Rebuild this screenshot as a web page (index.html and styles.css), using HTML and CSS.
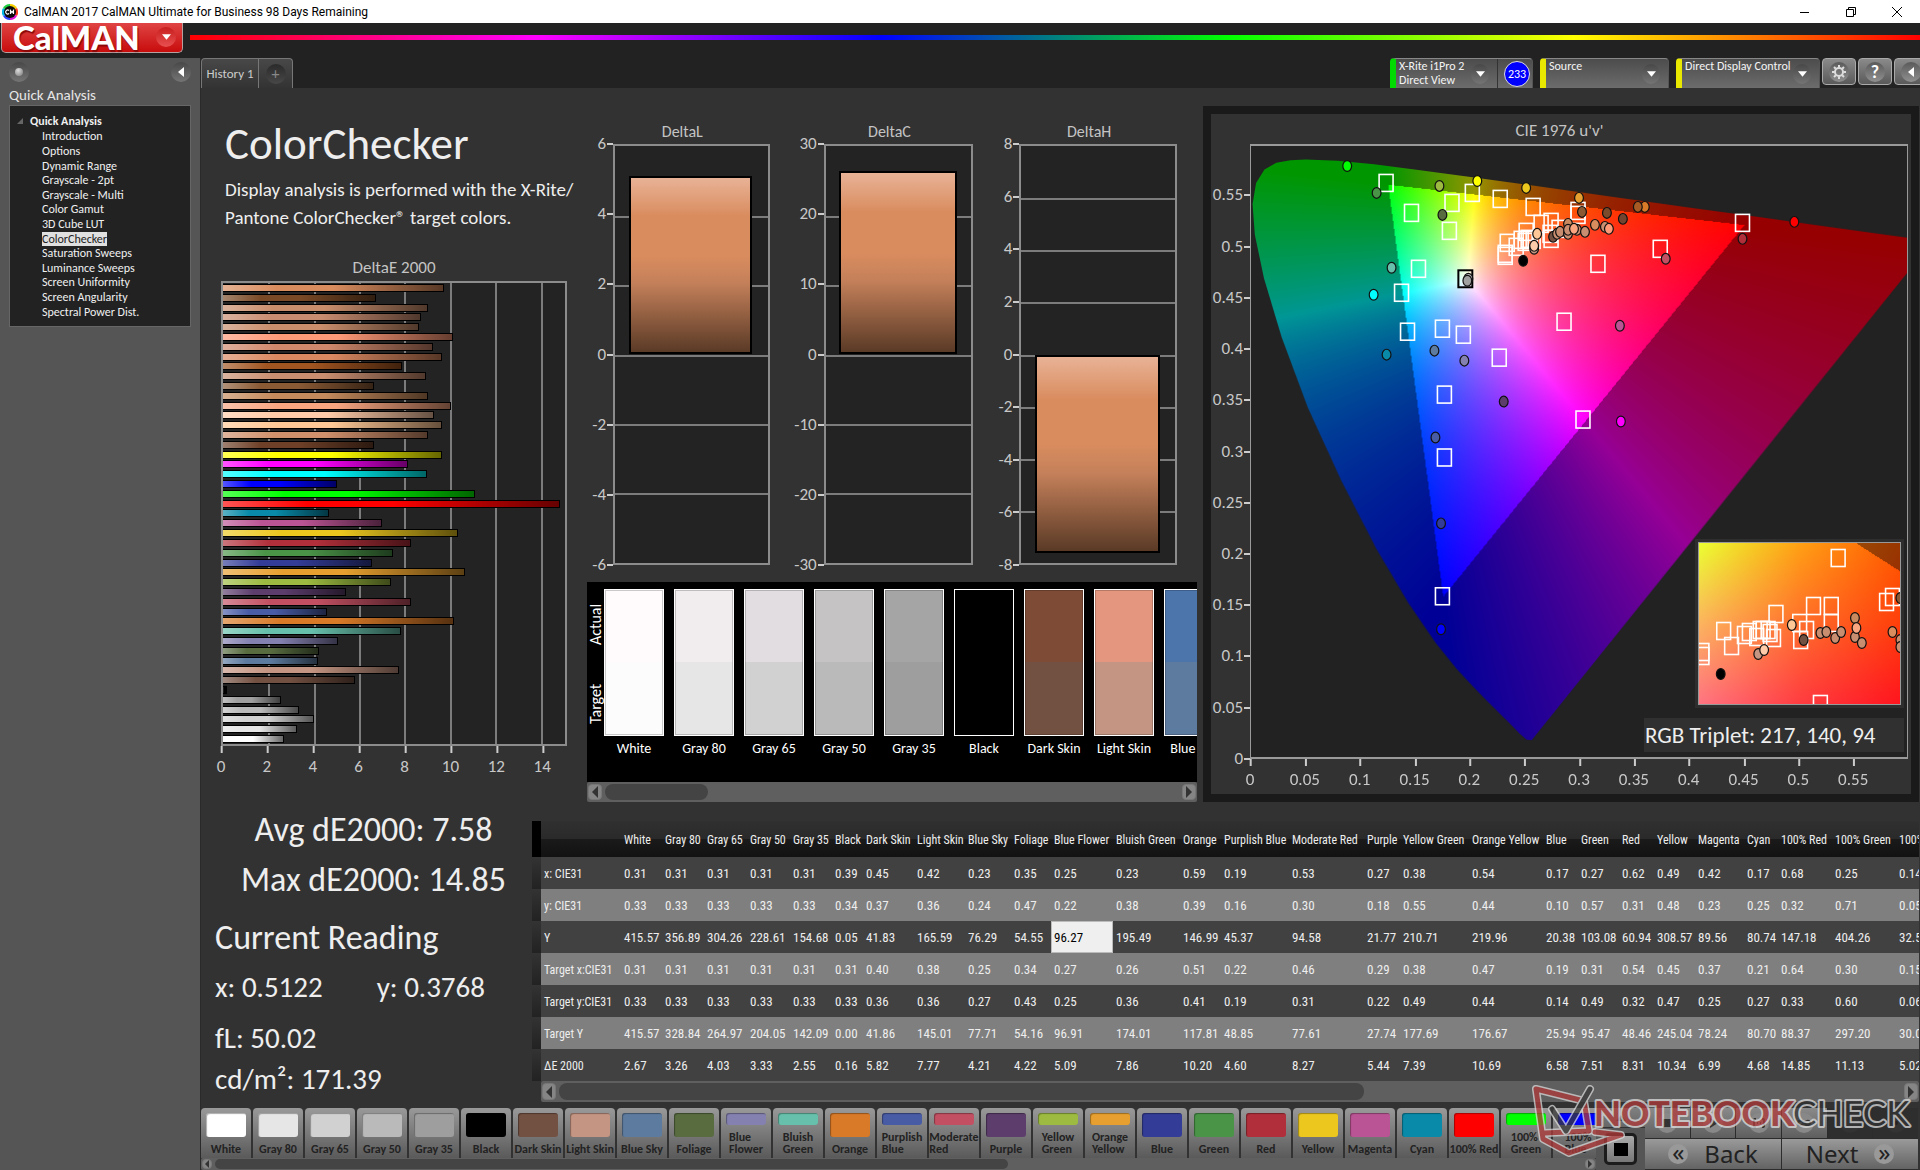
FILE: index.html
```html
<!DOCTYPE html>
<html lang="en">
<head>
<meta charset="utf-8">
<title>CalMAN 2017 CalMAN Ultimate for Business</title>
<link rel="stylesheet" href="styles.css">
</head>
<body>
<header class="titlebar">
  <svg class="app-icon" viewBox="0 0 16 16" aria-hidden="true">
    <path d="M8 0a8 8 0 0 1 7 4L8 8z" fill="#f4d000"/><path d="M15 4a8 8 0 0 1 0 8L8 8z" fill="#ff3b1f"/>
    <path d="M15 12a8 8 0 0 1-7 4V8z" fill="#e010d0"/><path d="M8 16a8 8 0 0 1-7-4l7-4z" fill="#3040ff"/>
    <path d="M1 12a8 8 0 0 1 0-8l7 4z" fill="#00b8e8"/><path d="M1 4a8 8 0 0 1 7-4v8z" fill="#20d040"/>
    <circle cx="8" cy="8" r="6" fill="#0a0a0a"/>
    <path d="M7 6.5a2 2 0 1 0 0 3M8.500 10V6.500L10 8.500l1.500-2V10" fill="none" stroke="#fff" stroke-width="1.200"/>
  </svg>
  <span class="app-title">CalMAN 2017 CalMAN Ultimate for Business 98 Days Remaining</span>
  <span class="win-buttons">
    <button aria-label="Minimize"><svg viewBox="0 0 12 12"><path d="M1 6.500h9"/></svg></button>
    <button aria-label="Restore"><svg viewBox="0 0 12 12"><path d="M1.500 3.500h7v7h-7zM3.500 3.500v-2h7v7h-2"/></svg></button>
    <button aria-label="Close"><svg viewBox="0 0 12 12"><path d="M1 1l10 10M11 1L1 11"/></svg></button>
  </span>
</header>

<div class="brandbar">
  <button class="logo">CalMAN<span class="round red"><svg viewBox="0 0 10 6"><path d="M0 0h10L5 6z"/></svg></span></button>
  <div class="rainbow"></div>
</div>

<div class="work">
  <aside class="sidebar">
    <div class="side-tools">
      <button class="round" aria-label="Pin"><span class="knob"></span></button>
      <button class="round" aria-label="Collapse"><svg viewBox="0 0 6 10"><path d="M6 0v10L0 5z"/></svg></button>
    </div>
    <h2>Quick Analysis</h2>
    <nav class="tree">
      <p class="tree-root"><svg viewBox="0 0 6 6"><path d="M6 0v6H0z"/></svg>Quick Analysis</p>
      <ul>
        <li><a href="#">Introduction</a></li>
        <li><a href="#">Options</a></li>
        <li><a href="#">Dynamic Range</a></li>
        <li><a href="#">Grayscale - 2pt</a></li>
        <li><a href="#">Grayscale - Multi</a></li>
        <li><a href="#">Color Gamut</a></li>
        <li><a href="#">3D Cube LUT</a></li>
        <li><a href="#" class="current">ColorChecker</a></li>
        <li><a href="#">Saturation Sweeps</a></li>
        <li><a href="#">Luminance Sweeps</a></li>
        <li><a href="#">Screen Uniformity</a></li>
        <li><a href="#">Screen Angularity</a></li>
        <li><a href="#">Spectral Power Dist.</a></li>
      </ul>
    </nav>
  </aside>

  <div class="stage">
    <div class="tabrow">
      <div class="tabs">
        <button class="tab">History 1</button><button class="tab add" aria-label="New tab"><span class="round dim">+</span></button>
      </div>
      <div class="devices">
        <div class="device meter green">
          <button class="device-main"><span>X-Rite i1Pro 2<br>Direct View</span><span class="round"><svg viewBox="0 0 10 6"><path d="M0 0h10L5 6z"/></svg></span></button>
          <button class="device-count"><span>233</span></button>
        </div>
        <div class="device source yellow">
          <button class="device-main"><span>Source</span><span class="round"><svg viewBox="0 0 10 6"><path d="M0 0h10L5 6z"/></svg></span></button>
        </div>
        <div class="device display yellow">
          <button class="device-main"><span>Direct Display Control</span><span class="round"><svg viewBox="0 0 10 6"><path d="M0 0h10L5 6z"/></svg></span></button>
        </div>
        <div class="tools">
          <button class="tool" aria-label="Settings"><span class="round lite"><svg class="gear" viewBox="0 0 16 16"><circle cx="8" cy="8" r="4"/><path d="M8 1v2.500M8 12.500V15M1 8h2.500M12.500 8H15M3 3l1.800 1.800M11.200 11.200L13 13M13 3l-1.800 1.800M4.800 11.200L3 13"/></svg></span></button>
          <button class="tool" aria-label="Help"><span class="round lite">?</span></button>
          <button class="tool" aria-label="Collapse"><span class="round lite"><svg viewBox="0 0 6 10"><path d="M6 0v10L0 5z"/></svg></span></button>
        </div>
      </div>
    </div>

    <main class="page">
      <div class="upper">
        <section class="intro">
          <h1>ColorChecker</h1>
          <p>Display analysis is performed with the X-Rite/<br>Pantone ColorChecker® target colors.</p>
          <h3>DeltaE 2000</h3>
          <div class="de-plot" id="dePlot"><div class="grid" id="deGrid"></div><div class="bars" id="deBars"></div></div>
          <div class="x-axis" id="deAxis"></div>
        </section>

        <section class="middle">
          <div class="deltas" id="deltas"></div>
          <div class="compare">
            <div class="compare-sides"><span>Actual</span><span>Target</span></div>
            <div class="compare-list" id="compare"></div>
          </div>
          <div class="scroll tall"><button aria-label="Left"><svg viewBox="0 0 6 12"><path d="M6 0v12L0 6z"/></svg></button><div class="track"><i class="thumb compare-thumb"></i></div><button aria-label="Right"><svg viewBox="0 0 6 12"><path d="M0 0v12l6-6z"/></svg></button></div>
        </section>

        <section class="cie">
          <h3>CIE 1976 u'v'</h3>
          <div class="cie-body">
            <div class="y-axis" id="cieY"></div>
            <div class="cie-plot">
              <canvas id="gamut" width="658" height="612"></canvas>
              <svg id="points" viewBox="0 0 658 612" preserveAspectRatio="none"></svg>
              <div class="inset"><canvas id="insetMap" width="202" height="160"></canvas><svg id="insetPoints" viewBox="0 0 204 161" preserveAspectRatio="none"></svg></div>
              <div class="triplet">RGB Triplet: 217, 140, 94</div>
            </div>
            <div class="x-axis" id="cieX"></div>
          </div>
        </section>
      </div>

      <div class="lower">
        <section class="readings">
          <p class="big mid">Avg dE2000: 7.58</p>
          <p class="big mid">Max dE2000: 14.85</p>
          <p class="big head">Current Reading</p>
          <p class="pair"><span>x: 0.5122</span><span>y: 0.3768</span></p>
          <p class="lum">fL: 50.02</p>
          <p class="cd">cd/m²: 171.39</p>
        </section>
        <section class="data">
          <div class="table-wrap"><table id="table"></table></div>
          <div class="scroll data-scroll"><button aria-label="Left"><svg viewBox="0 0 6 12"><path d="M6 0v12L0 6z"/></svg></button><div class="track"><i class="thumb data-thumb"></i></div><button aria-label="Right"><svg viewBox="0 0 6 12"><path d="M0 0v12l6-6z"/></svg></button></div>
        </section>
      </div>

      <footer class="dock">
        <div class="patches">
          <div class="patch-list" id="patches"></div>
          <div class="scroll thin"><button aria-label="Left"><svg viewBox="0 0 6 12"><path d="M6 0v12L0 6z"/></svg></button><div class="track"><i class="thumb patch-thumb"></i></div><button aria-label="Right"><svg viewBox="0 0 6 12"><path d="M0 0v12l6-6z"/></svg></button></div>
        </div>
        <div class="stopcol">
          <button class="up" aria-label="Up"><svg viewBox="0 0 10 6"><path d="M0 6h10L5 0z"/></svg></button>
          <button class="stop" aria-label="Stop"><span></span></button>
        </div>
        <div class="transport">
          <button aria-label="Stop reading"><svg viewBox="0 0 14 14"><path d="M3 3h8v8H3z"/></svg></button>
          <button aria-label="Play"><svg viewBox="0 0 14 14"><path d="M4 2l8 5-8 5z"/></svg></button>
          <button aria-label="Play range"><svg viewBox="0 0 14 14"><path d="M1 2h3v2H3v6h1v2H1zM13 2h-3v2h1v6h-1v2h3zM5 6h1v2H5zM8 6h1v2H8z"/></svg></button>
          <button aria-label="Continuous"><svg viewBox="0 0 14 14"><path class="line" d="M7 7C5 4 1 4 1 7s4 3 6 0 6-3 6 0-4 3-6 0z"/></svg></button>
          <button class="off" aria-label="Refresh"><svg viewBox="0 0 14 14"><path class="line" d="M11 5a5 5 0 1 0 0 5"/></svg></button>
          <button class="off" aria-label="More"><svg viewBox="0 0 14 14"><circle cx="7" cy="7" r="2"/></svg></button>
          <button class="nav"><span class="chev">«</span>Back</button>
          <button class="nav">Next<span class="chev">»</span></button>
        </div>
      </footer>
    </main>
  </div>
</div>

<svg class="watermark" viewBox="0 0 380 72" aria-hidden="true">
  <g fill="none" stroke-linejoin="round" stroke-linecap="round">
    <path d="M4 4l48 12 5 30-44 2M4 4l7 50 26 14 52-18-26-3" stroke="#d8d8d8" stroke-width="8"/>
    <path d="M4 4l48 12 5 30-44 2M4 4l7 50 26 14 52-18-26-3" stroke="#b03a3a" stroke-width="5"/>
    <path d="M20 24l14 22L58 4" stroke="#d8d8d8" stroke-width="8"/>
    <path d="M20 24l14 22L58 4" stroke="#3a3a3a" stroke-width="5"/>
  </g>
  <text class="wm-red" x="62" y="41">NOTEBOOK</text>
  <text class="wm-dark" x="261" y="41">CHECK</text>
</svg>
<script src="app.js"></script>
</body>
</html>
```
FILE: styles.css
```css
*{box-sizing:border-box}
body{margin:0;min-height:100vh;display:flex;flex-direction:column;background:#222;color:#e6e6e6;font-family:Carlito,Lato,sans-serif;font-size:12px;overflow:hidden;position:relative}
button{margin:0;padding:0;border:0;background:none;color:inherit;font:inherit;display:flex;align-items:center;justify-content:center}
h1,h2,h3,p,ul{margin:0;padding:0;font-weight:400}
svg{display:block}

.titlebar{height:23px;background:#fff;color:#000;display:flex;align-items:center;gap:6px;padding-left:2px;font-family:Roboto,sans-serif;font-size:12px}
.app-icon{width:16px;height:16px}
.win-buttons{margin-left:auto;display:flex}
.win-buttons button{width:46px;height:20px}
.win-buttons svg{width:12px;height:12px;fill:none;stroke:#000}

.brandbar{display:flex;align-items:center;gap:7px;height:35px;padding:0 0 6px 1px}
.logo{width:182px;height:30px;border:1px solid #b9a0a0;border-top:0;border-radius:0 0 5px 5px;background:linear-gradient(#e04444,#c80c0c);color:#fff;font-family:Lato,sans-serif;font-weight:900;font-size:33px;line-height:28px;justify-content:space-between;padding:0 6px 0 11px;text-shadow:1px 2px 1px #8a0808}
.rainbow{flex:1;height:5px;background:linear-gradient(90deg,#f00,#f0f 20%,#00f 40%,#0f0 60%,#ff0 80%,#f00)}

.round{width:20px;height:20px;border-radius:50%;background:linear-gradient(#484848,#757575);display:flex;align-items:center;justify-content:center;flex:none}
.round svg{width:9px;height:6px;fill:#fff}
.round.red{background:linear-gradient(#c81e1e,#e85050)}
.round.dim{background:linear-gradient(#2a2a2a,#484848);color:#888;font-size:16px;line-height:20px}
.round.lite{background:linear-gradient(#5a5a5a,#909090);color:#fff;font-weight:700;font-size:18px}
.round .knob{width:8px;height:8px;border-radius:50%;background:radial-gradient(at 40% 30%,#ddd,#777)}
.side-tools .round svg,.tool:last-child .round svg{width:6px;height:10px}
.round .gear{width:16px;height:16px;fill:none;stroke:#ddd;stroke-width:2}

.work{flex:1;display:flex}
.sidebar{width:201px;flex:none;background:#555;border-right:1px solid #2a2a2a;padding:4px 9px 0}
.side-tools{display:flex;justify-content:space-between;height:20px}
.sidebar h2{font-size:15px;line-height:18px;margin-top:4px}
.tree{background:#222;border:1px solid #1a1a1a;outline:1px solid #666;outline-offset:-1px;height:222px;padding:8px 0 0 7px;color:#f0f0f0;margin-top:1px}
.tree-root{font-weight:700;line-height:14px;display:flex;align-items:center;gap:7px}
.tree-root svg{width:6px;height:6px;fill:#666}
.tree ul{list-style:none;padding:1px 0 0 25px;display:grid;grid-auto-rows:1fr;height:191px}
.tree li{display:flex;align-items:center}
.tree a{color:inherit;text-decoration:none;line-height:14px}
.tree a.current{background:#e0e0e0;color:#222}

.stage{flex:1;min-width:0;display:flex;flex-direction:column}
.tabrow{display:flex;justify-content:space-between;height:30px}
.tabs{display:flex}
.tab{border:1px solid #777;border-bottom:0;border-radius:4px 0 0 0;background:linear-gradient(#484848,#333);width:58px;font-size:13px;color:#ccc}
.tab.add{width:34px;border-left:0;border-radius:0 4px 0 0}
.devices{display:flex;gap:7px}
.device{display:flex;background:linear-gradient(#4c4c4c,#6c6c6c);border-top:1px solid #888;border-right:1px solid #555;border-radius:4px 4px 0 0;border-left:6px solid}
.device.green{border-left-color:#00dc00}
.device.yellow{border-left-color:#e8e800}
.meter{width:143px}.source{width:129px}.display{width:144px}
.device-main{flex:1;align-items:flex-start;justify-content:space-between;text-align:left;line-height:14px;padding:0 8px 0 3px;color:#f4f4f4;white-space:nowrap}
.device-main .round{margin-top:5px;margin-left:-12px;width:18px}
.device-count{width:35px;padding-left:4px;border-left:1px solid #333}
.device-count span{width:26px;height:26px;border-radius:50%;background:#00f;border:1px solid #ddd;color:#fff;font-size:12px;line-height:24px}
.tools{display:flex;gap:2px;margin-left:-5px;margin-right:-8px}
.tool{width:34px;height:27px;border:1px solid #aaa;border-radius:4px;background:linear-gradient(#8a8a8a,#5a5a5a)}

.page{flex:1;background:#323232;display:flex;flex-direction:column;min-width:0}
.upper{display:grid;grid-template-columns:386fr 616fr 716fr 1px;height:714px}
h3{font-size:17px;line-height:20px;text-align:center;color:#c4c4c4}
.intro{padding:28px 20px 0;min-width:0}
.intro h1{font-size:45px;line-height:56px;padding-left:4px;color:#eee}
.intro p{font-size:19px;line-height:28px;padding:4px 0 0 4px;color:#eee;white-space:nowrap}
.intro h3{margin:26px 0 3px}
.de-plot{position:relative;height:465px;background:#232323;border:2px solid #8c8c8c}
.grid{position:absolute;inset:0}
.grid i{position:absolute;background:#7c7c7c}
.de-plot .grid i{top:0;bottom:0;width:2px}
.bars{position:absolute;inset:0;display:grid;grid-auto-rows:1fr;align-items:center}
.bars i{height:8px;border:1px solid #000;border-left:0;background:var(--c)}
.bars i::after{content:"";display:block;height:100%;background:linear-gradient(90deg,#fff5,#fff0 25%,#0000 50%,#0009)}
.x-axis{position:relative;height:31px;font-size:17px;line-height:20px;color:#c8c8c8}
.x-axis span{position:absolute;top:11px;transform:translateX(-50%)}
.x-axis span::before{content:"";position:absolute;left:50%;top:-11px;height:7px;width:2px;background:#ccc}

.middle{padding-top:34px;display:flex;flex-direction:column;min-width:0;margin-right:6px}
.deltas{display:grid;grid-template-columns:26px 157fr 54px 150fr 46px 158fr;padding-right:20px}
.deltas h3{font-size:16px;padding-right:18px;padding-bottom:2px}
.y-axis{position:relative;font-size:17px;line-height:20px;color:#c8c8c8}
.y-axis span{position:absolute;right:7px;transform:translateY(-50%)}
.y-axis span::after{content:"";position:absolute;right:-7px;top:9px;width:6px;height:2px;background:#ccc}
.d-plot{position:relative;height:421px;background:#232323;border:2px solid #8c8c8c}
.d-plot .grid i{left:0;right:0;height:2px}
.d-bar{position:absolute;left:9%;right:10%;border:2px solid #000;background:linear-gradient(#e8b296,#d98c5e 22%,#d98c5e 45%,#c4805a 60%,#5a3a26)}
.compare{margin-top:17px;height:200px;background:#000;display:flex;overflow:hidden}
.compare-sides{width:17px;flex:none;display:flex;flex-direction:column;padding-top:4px;font-size:16px;line-height:17px;color:#fff}
.compare-sides span{writing-mode:vertical-rl;transform:rotate(180deg);height:76px;text-align:center;margin-bottom:4px}
.compare-list{display:flex;gap:10px;padding-top:7px;flex:none}
.compare-list figure{margin:0;width:60px;text-align:center;font-size:14px;line-height:26px;color:#fff;white-space:nowrap}
.compare-list div{height:147px;border:1px solid #fff;box-shadow:inset 0 0 0 1px #0003}
.scroll{display:flex;background:#5f5f5f;padding:2px 1px;height:20px;border-radius:2px}
.scroll button{width:14px;background:#858585;border:1px solid #777;border-radius:4px}
.scroll button svg{width:6px;height:12px;fill:#333}
.track{flex:1;padding:0 3px}
.thumb{display:block;height:100%;background:#444;border-radius:8px}
.compare-thumb{width:18%}
.data-thumb{width:60%}
.patch-thumb{width:58%}

.cie{margin-top:18px;border:8px solid #1a1a1a;padding:7px 3px 0 0}
.cie-body{display:grid;grid-template-columns:39px 1fr;padding-top:3px}
.cie .x-axis{grid-column:2}
.cie-plot{position:relative;height:615px;background:#222;border:1px solid #9a9a9a;border-width:2px 1px}
.cie-plot>canvas,.cie-plot>svg{position:absolute;inset:0;width:100%;height:100%}
.inset{position:absolute;right:6px;bottom:52px;width:31%;height:163px;border:1px solid #999;outline:3px solid #2e2e2e}
.inset canvas,.inset svg{position:absolute;inset:0;width:100%;height:100%}
.triplet{position:absolute;right:3px;bottom:5px;width:260px;height:34px;background:#303030;color:#eee;font-size:23px;line-height:34px;padding-left:1px;white-space:nowrap}

.lower{display:grid;grid-template-columns:331px minmax(0,1fr);height:300px}
.readings{padding:3px 0 0 14px;color:#eee;font-size:29px;line-height:36px}
.big{font-size:34px;line-height:50px}
.mid{text-align:center}
.head{margin-top:8px}
.pair{display:flex;gap:54px;margin-top:6px}
.lum{margin-top:15px}
.cd{margin-top:5px}
.data{padding-top:19px;margin-right:1px;min-width:0}
.table-wrap{overflow:hidden}
table{table-layout:fixed;border-collapse:collapse;width:1440px;font-family:"Roboto Condensed",Carlito,sans-serif;font-size:12px;color:#eee}
th,td{padding:1px 0 0 3px;text-align:left;font-weight:400;white-space:nowrap;height:32px}
td{font-size:13px}
thead th{height:36px;background:linear-gradient(#303030,#2a2a2a 50%,#1a1a1a 51%,#121212)}
tbody tr{background:#414141}
tbody tr:nth-child(even){background:#7f7f7f}
.edge{padding:0;background:linear-gradient(#333,#222)}
thead .edge{background:#000}
td.sel{background:#efefef;color:#000;box-shadow:inset 0 0 0 1px #bbb}
.data-scroll{margin-left:9px;height:21px}

.dock{margin-top:6px;display:flex;height:62px}
.patches{flex:1;min-width:0}
.patch-list{display:flex;gap:2px;overflow:hidden;height:50px}
.patch{width:50px;flex:none;flex-direction:column;justify-content:space-between;padding:5px 0 3px;border-radius:4px 4px 0 0;background:linear-gradient(#999,#5a5a5a);color:#222;line-height:12px;font-size:12px;text-align:left;font-weight:700;white-space:nowrap}
.patch i{width:40px;height:24px;border-radius:3px;box-shadow:inset 1px 1px 1px #0005}
.patch.two i{height:12px}
.scroll.thin{height:12px;padding:1px}
.scroll.thin button{width:10px}
.scroll.thin button svg{width:4px;height:8px}
.stopcol{width:49px;display:flex;flex-direction:column;gap:1px}
.up{height:19px;background:linear-gradient(#808080,#666)}
.up svg{width:10px;height:6px;fill:#333}
.stop{flex:1;background:#555}
.stop span{width:33px;height:32px;border:3px solid #1c1c1c;border-radius:5px;background:linear-gradient(#000,#000) center/14px 13px no-repeat,linear-gradient(#aaa,#777)}
.transport{width:273px;display:grid;grid-template-columns:repeat(6,1fr);grid-template-rows:30px 30px;gap:1px;background:#2c2c2c;margin-right:2px}
.transport button{background:linear-gradient(#8a8a8a,#5e5e5e)}
.transport .off{background:#2e2e2e}
.transport svg{width:20px;height:20px;padding:3px;border-radius:50%;background:#888;fill:#333}
.transport .off svg{background:#333;fill:#222}
.transport .line{fill:none;stroke:#333;stroke-width:2}
.transport .nav{grid-column:span 3;background:linear-gradient(#9a9a9a,#636363);color:#222;font-family:"Noto Sans",sans-serif;font-size:24px;line-height:28px;gap:16px}
.chev{width:20px;height:20px;border-radius:50%;background:#999;line-height:16px;text-align:center}
.watermark{position:absolute;right:8px;bottom:13px;width:380px;height:72px;opacity:.75;pointer-events:none}
.watermark text{font-family:Lato,sans-serif;font-size:35px;paint-order:stroke;stroke:#ddd;stroke-width:4px;stroke-linejoin:round}
.wm-red{font-weight:900;fill:#b03a3a}
.wm-dark{font-weight:400;fill:#333}
```
FILE: app.js
```js
const $ = id => document.getElementById(id);
const pct = n => n.toFixed(2) + '%';

/* DeltaE 2000 bars, top to bottom */
const deBars = [[9.75,'#d98c5e'],[6.75,'#7a4a26'],[9.05,'#c98e6c'],[8.75,'#c88c70'],[8.65,'#c98e6c'],[10.15,'#ff9a78'],[9.25,'#d0886c'],[9.65,'#d98860'],[7.9,'#a05420'],[8.95,'#c98e70'],[6.65,'#8a5a35'],[9.05,'#c48a5c'],[10.05,'#f8a580'],[9.3,'#ffcba8'],[9.65,'#ffc896'],[9.05,'#d0906c'],[6.65,'#6e4028'],
[9.66,'#ff0'],[8.15,'#f0f'],[9,'#0ff'],[5.02,'#00f'],[11.13,'#0f0'],[14.85,'#f00'],[4.68,'#088aa8'],[6.99,'#bb5494'],[10.34,'#ecc81f'],[8.31,'#b02f3a'],[7.51,'#4a9448'],[6.58,'#333c96'],[10.69,'#e7a02f'],[7.39,'#9dbb40'],[5.44,'#5c3d6c'],[8.27,'#c25062'],[4.6,'#485ba5'],[10.2,'#d87a28'],[7.86,'#67c0ab'],[5.09,'#8480b0'],[4.22,'#586c40'],[4.21,'#5d7b9f'],[7.77,'#c49582'],[5.82,'#735142'],[.16,'#000'],[2.55,'#a0a0a0'],[3.33,'#bababa'],[4.03,'#d2d2d2'],[3.26,'#e6e6e6'],[2.67,'#fff']];
const deMax = 15.08;
$('deBars').innerHTML = deBars.map(([v,c]) => `<i style="width:${pct(v/deMax*100)};--c:${c}"></i>`).join('');
for (let v = 0; v <= 14; v += 2) {
  const x = pct(v/deMax*100);
  if (v) $('deGrid').innerHTML += `<i style="left:${x}"></i>`;
  $('deAxis').innerHTML += `<span style="left:${x}">${v}</span>`;
}

/* DeltaL / DeltaC / DeltaH */
const deltas = [['DeltaL',6,2,5.13],['DeltaC',30,10,26.4],['DeltaH',8,2,-7.62]];
let titles = '', plots = '';
deltas.forEach(([name,max,step,val]) => {
  let ticks = '', lines = '';
  for (let v = max; v >= -max; v -= step) {
    const y = pct((max-v)/(2*max)*100);
    ticks += `<span style="top:${y}">${v}</span>`;
    if (Math.abs(v) < max) lines += `<i style="top:${y}"></i>`;
  }
  const top = (max-Math.max(val,0))/(2*max)*100, h = Math.abs(val)/(2*max)*100;
  titles += `<span></span><h3>${name}</h3>`;
  plots += `<div class="y-axis">${ticks}</div><div class="d-plot"><div class="grid">${lines}</div><div class="d-bar" style="top:${pct(top)};height:${pct(h)}"></div></div>`;
});
$('deltas').innerHTML = titles + plots;

/* Actual / target strips */
$('compare').innerHTML = [['White','#fffbfd','#fcfcfc'],['Gray 80','#f1ecee','#e6e6e6'],['Gray 65','#e1dde0','#d1d1d1'],['Gray 50','#c5c3c4','#bababa'],['Gray 35','#a5a5a6','#9e9e9e'],['Black','#000','#000'],['Dark Skin','#7e4b37','#735142'],['Light Skin','#e4967f','#c49582'],['Blue Sky','#4c76ab','#5d7b9f']]
  .map(([n,a,t]) => `<figure><div style="background:linear-gradient(${a} 50%,${t} 50%)"></div>${n}</figure>`).join('');

/* Chromaticity chart */
for (let i = 0; i <= 11; i++) {
  const label = String(+(i*0.05).toFixed(2)), p = i/12*100;
  $('cieX').innerHTML += `<span style="left:${pct(p)}">${label}</span>`;
  $('cieY').innerHTML += `<span style="top:${pct(100-p)}">${label}</span>`;
}
$('cieY').style.height = document.querySelector('.cie-plot').offsetHeight + 'px';
const locus = [.1741,.005,.1714,.0051,.1689,.0069,.1644,.0109,.1566,.0177,.151,.0227,.144,.0297,.1355,.0399,.1241,.0578,.1096,.0868,.0913,.1327,.0687,.2007,.0454,.295,.0235,.4127,.0082,.5384,.0039,.6548,.0139,.7502,.0389,.812,.0743,.8338,.1142,.8262,.1547,.8059,.2296,.7543,.3016,.6923,.3731,.6245,.4441,.5547,.5125,.4866,.5752,.4242,.627,.3725,.6658,.334,.6915,.3083,.719,.2809,.7347,.2653];
const cv = $('gamut'), W = cv.width, H = cv.height, cx = cv.getContext('2d');
const img = cx.createImageData(W, H);
for (let j = 0; j < H; j++) for (let i = 0; i < W; i++) {
  const u = i/W*.6, v = (H-j)/H*.6 || .001;
  const d = 6*u-16*v+12, x = 9*u/d, y = 4*v/d, X = x/y, Z = (1-x-y)/y;
  const rgb = [3.2406*X-1.5372-.4986*Z, -.9689*X+1.8758+.0415*Z, .0557*X-.204+1.057*Z];
  const inside = Math.min(...rgb) >= 0, m = Math.max(...rgb), k = (inside ? 255 : 150), o = (j*W+i)*4;
  for (let c = 0; c < 3; c++) img.data[o+c] = k*Math.pow(Math.max(rgb[c],0)/m, .9);
  img.data[o+3] = 255;
}
cx.putImageData(img, 0, 0);
cx.globalCompositeOperation = 'destination-in';
cx.beginPath();
for (let i = 0; i < locus.length; i += 2) {
  const x = locus[i], y = locus[i+1], d = -2*x+12*y+3;
  cx.lineTo(4*x/d/.6*W, H-9*y/d/.6*H);
}
cx.fill();

const box = ([x,y,c]) => `<rect x="${x-7}" y="${y-8.5}" width="14" height="17" fill="none" stroke="${c||'#fff'}" stroke-width="${c?2:1.6}"/>`;
const dot = ([x,y,c]) => `<ellipse cx="${x}" cy="${y}" rx="4.4" ry="5.4" fill="${c||'#c98e70'}" stroke="#111" stroke-width="1.2"/>`;
$('points').innerHTML = [[135.5,37],[161,67],[201.6,57],[199,85],[222,47],[250,53],[283,61],[328,65],[328,69],[168,123],[151,147],[157,186],[192,183],[213,189],[249,212],[194,249],[333,274],[314,176],[348,118],[410.5,103],[493,77],[194,312],[192,451],[291,78],[301,76],[309,83],[300,88],[301,93],[276,86],[257,97],[255,108],[255,110],[266,101],[271,94],[275,96],[278,93],[280,94],[283,94],[215,133,'#000']].map(box).join('')
 + [[96.5,20,'#0f0'],[126,47,'#4a9448'],[189,40,'#9dbb40'],[227,35,'#ff0'],[276,42,'#ecc81f'],[329,52,'#e7a02f'],[192,69,'#586c40'],[332,66,'#8a5a35'],[357,67,'#7a4a2a'],[373,73,'#734530'],[395,61,'#d87a28'],[388,61,'#a85a25'],[545,76,'#f00'],[493,93,'#b02f3a'],[416,113,'#c25062'],[141,122,'#67c0ab'],[123,149,'#0ff'],[136,209,'#088aa8'],[184,205,'#5d7b9f'],[214,215,'#8480b0'],[253.5,256,'#5c3d6c'],[370,180,'#bb5494'],[371,276,'#f0f'],[185,292,'#485ba5'],[190.6,378,'#333c96'],[190.6,484,'#00f'],[273,115,'#000'],[284,103,'#c49582'],[284,100,'#ffcba8'],[287,88,'#ffc896'],[303,91,'#735142'],[307,88],[310,86],[318,78,'#c98a60'],[318,88],[318,84],[327,84],[324,83,'#f8a580'],[335,86],[345,79,'#d98c5e'],[355,81],[359,83,'#ff9a78'],[218,133,'#bababa'],[217,135,'#a0a0a0']].map(dot).join('');

/* Enlarged view of the skin tone area */
const iv = $('insetMap'), ic = iv.getContext('2d'), im = ic.createImageData(iv.width, iv.height);
const mesh = [[[235,255,50],[255,160,20],[255,90,0]],[[252,180,95],[255,110,45],[255,62,10]],[[255,115,130],[255,60,65],[255,20,30]]];
for (let j = 0; j < iv.height; j++) for (let i = 0; i < iv.width; i++) {
  const fx = i/iv.width*2, fy = j/iv.height*2, a = fx|0, b = fy|0, s = fx-a, t = fy-b, o = (j*iv.width+i)*4;
  const k = (i-158) > j*1.58 ? .6 : 1;
  for (let c = 0; c < 3; c++) im.data[o+c] = k*((mesh[b][a][c]*(1-s)+mesh[b][a+1][c]*s)*(1-t)+(mesh[b+1][a][c]*(1-s)+mesh[b+1][a+1][c]*s)*t);
  im.data[o+3] = 255;
}
ic.putImageData(im, 0, 0);
$('insetPoints').innerHTML = [[141,15],[190,59],[196,54],[116,63],[134,63],[78,71],[102,80],[134,80],[109,87],[103,97],[25,88],[33,103],[46,92],[51,89],[58.5,94],[62,87],[65,87],[70,87],[72,90],[75.5,95],[3,113],[3,109],[123,161]].map(box).join('')
 + [[22,131,'#000'],[60,111,'#c49582'],[66,107,'#ffcba8'],[94,82,'#ffc896'],[106,97,'#735142'],[123,90],[129,89],[138,95],[144,89],[158,75,'#c98a60'],[158,94],[159.5,85,'#f8a580'],[165,100],[196,89,'#d98c5e'],[204,55,'#8a5a35'],[204,97],[204,104]].map(dot).join('');

/* Data table */
const cols = [['White',41],['Gray 80',42],['Gray 65',43],['Gray 50',43],['Gray 35',42],['Black',31],['Dark Skin',51],['Light Skin',51],['Blue Sky',46],['Foliage',40],['Blue Flower',62],['Bluish Green',67],['Orange',41],['Purplish Blue',68],['Moderate Red',75],['Purple',36],['Yellow Green',69],['Orange Yellow',74],['Blue',35],['Green',41],['Red',35],['Yellow',41],['Magenta',49],['Cyan',34],['100% Red',54],['100% Green',64],['100% Blue',76]];
const rows = {
 'x: CIE31':'0.31 0.31 0.31 0.31 0.31 0.39 0.45 0.42 0.23 0.35 0.25 0.23 0.59 0.19 0.53 0.27 0.38 0.54 0.17 0.27 0.62 0.49 0.42 0.17 0.68 0.25 0.14',
 'y: CIE31':'0.33 0.33 0.33 0.33 0.33 0.34 0.37 0.36 0.24 0.47 0.22 0.38 0.39 0.16 0.30 0.18 0.55 0.44 0.10 0.57 0.31 0.48 0.23 0.25 0.32 0.71 0.05',
 'Y':'415.57 356.89 304.26 228.61 154.68 0.05 41.83 165.59 76.29 54.55 96.27 195.49 146.99 45.37 94.58 21.77 210.71 219.96 20.38 103.08 60.94 308.57 89.56 80.74 147.18 404.26 32.5',
 'Target x:CIE31':'0.31 0.31 0.31 0.31 0.31 0.31 0.40 0.38 0.25 0.34 0.27 0.26 0.51 0.22 0.46 0.29 0.38 0.47 0.19 0.31 0.54 0.45 0.37 0.21 0.64 0.30 0.15',
 'Target y:CIE31':'0.33 0.33 0.33 0.33 0.33 0.33 0.36 0.36 0.27 0.43 0.25 0.36 0.41 0.19 0.31 0.22 0.49 0.44 0.14 0.49 0.32 0.47 0.25 0.27 0.33 0.60 0.06',
 'Target Y':'415.57 328.84 264.97 204.05 142.09 0.00 41.86 145.01 77.71 54.16 96.91 174.01 117.81 48.85 77.61 27.74 177.69 176.67 25.94 95.47 48.46 245.04 78.24 80.70 88.37 297.20 30.0',
 'ΔE 2000':'2.67 3.26 4.03 3.33 2.55 0.16 5.82 7.77 4.21 4.22 5.09 7.86 10.20 4.60 8.27 5.44 7.39 10.69 6.58 7.51 8.31 10.34 6.99 4.68 14.85 11.13 5.02'
};
$('table').innerHTML = '<colgroup><col style="width:9px"><col style="width:80px">' + cols.map(c => `<col style="width:${c[1]}px">`).join('') + '</colgroup><thead><tr><th class="edge"></th><th></th>' + cols.map(c => `<th scope="col">${c[0]}</th>`).join('') + '</tr></thead><tbody>'
 + Object.entries(rows).map(([n,r]) => `<tr><td class="edge"></td><th scope="row">${n}</th>` + r.split(' ').map(v => `<td${v === '96.27' ? ' class="sel"' : ''}>${v}</td>`).join('') + '</tr>').join('') + '</tbody>';

/* Patch buttons */
$('patches').innerHTML = [['White','#fff'],['Gray 80','#e6e6e6'],['Gray 65','#d1d1d1'],['Gray 50','#bababa'],['Gray 35','#9e9e9e'],['Black','#000'],['Dark Skin','#735142'],['Light Skin','#c49582'],['Blue Sky','#5d7b9f'],['Foliage','#586c40'],['Blue<br>Flower','#8480b0'],['Bluish<br>Green','#67c0ab'],['Orange','#d87a28'],['Purplish<br>Blue','#485ba5'],['Moderate<br>Red','#c25062'],['Purple','#5c3d6c'],['Yellow<br>Green','#9dbb40'],['Orange<br>Yellow','#e7a02f'],['Blue','#333c96'],['Green','#4a9448'],['Red','#b02f3a'],['Yellow','#ecc81f'],['Magenta','#bb5494'],['Cyan','#088aa8'],['100% Red','#f00'],['100%<br>Green','#0f0'],['100%<br>Blue','#00f']]
  .map(([n,c]) => `<button class="patch${n.includes('<br>') ? ' two' : ''}"><i style="background:${c}"></i><span>${n}</span></button>`).join('');
```
